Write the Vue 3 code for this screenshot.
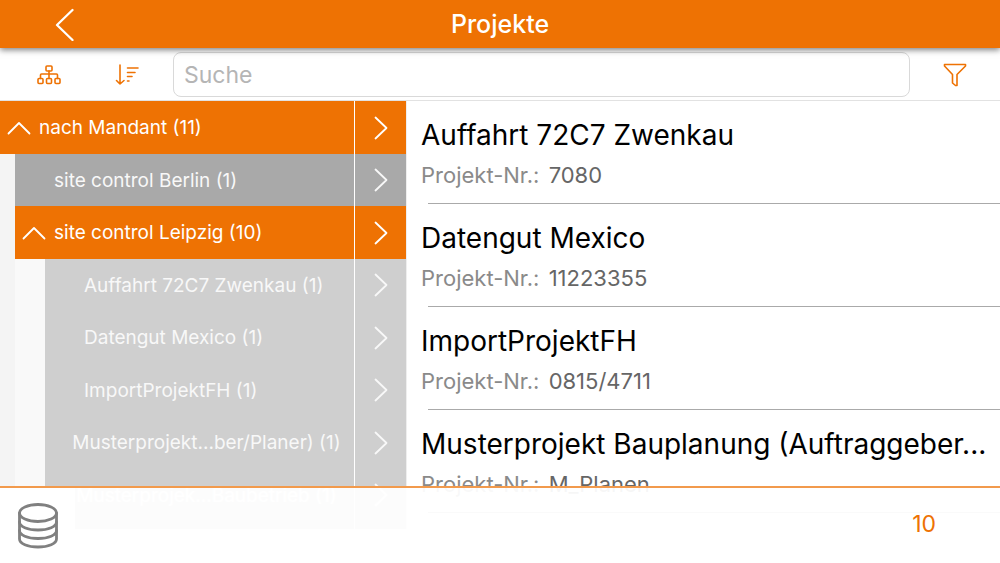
<script setup>
import { ref } from 'vue'

const search = ref('')

const tree = [
  { label: 'nach Mandant (11)', level: 0, open: true },
  { label: 'site control Berlin (1)', level: 1 },
  { label: 'site control Leipzig (10)', level: 1, open: true },
  { label: 'Auffahrt 72C7 Zwenkau (1)', level: 2 },
  { label: 'Datengut Mexico (1)', level: 2 },
  { label: 'ImportProjektFH (1)', level: 2 },
  { label: 'Musterprojekt...ber/Planer) (1)', level: 2, long: true },
  { label: 'Musterprojek...Baubetrieb (1)', level: 2, long: true },
  { label: '', level: 2 }
]

const projects = [
  { name: 'Auffahrt 72C7 Zwenkau', number: '7080' },
  { name: 'Datengut Mexico', number: '11223355' },
  { name: 'ImportProjektFH', number: '0815/4711' },
  { name: 'Musterprojekt Bauplanung (Auftraggeber...', number: 'M_Planen' }
]
</script>

<template>
  <div class="app">
    <header class="titlebar">
      <button class="back" type="button" aria-label="Zurück">
        <svg width="20" height="34" viewBox="0 0 20 34"><path d="M17.500 3 2 18 17.500 33" /></svg>
      </button>
      <h1>Projekte</h1>
    </header>

    <div class="toolbar">
      <button class="tool" type="button" aria-label="Gruppierung">
        <svg width="24" height="20" viewBox="0 0 24 20">
          <rect x="9" y="1" width="6" height="5" rx="1" />
          <rect x="1" y="13.500" width="5" height="5" rx="1" />
          <rect x="9.500" y="13.500" width="5" height="5" rx="1" />
          <rect x="18" y="13.500" width="5" height="5" rx="1" />
          <path d="M12 6v7.500M3.500 13.500V10q0-1 1-1h15q1 0 1 1v3.500" />
        </svg>
      </button>
      <button class="tool" type="button" aria-label="Sortierung">
        <svg width="24" height="22" viewBox="0 0 24 22">
          <path d="M5 1v19M1.500 16.500l3.500 3.500 4-3.500M12.500 4h10.500M12.500 8.500h7.500M12.500 12.500h4.500M12.500 17h1.500" />
        </svg>
      </button>
      <input v-model="search" class="search" type="search" placeholder="Suche" aria-label="Suche" />
      <button class="tool filter" type="button" aria-label="Filter">
        <svg width="24" height="24" viewBox="0 0 24 24">
          <path d="M1.500 1.500h21v1.500l-8.500 8.500v11h-1.500l-3-2.500v-8.500L1.500 3z" />
        </svg>
      </button>
    </div>

    <main class="content">
      <ul class="tree">
        <li v-for="(node, i) in tree" :key="i" class="node" :class="['level' + node.level, { open: node.open, long: node.long }]">
          <button class="label" type="button" :aria-label="node.label || 'Projekt'">
            <span class="toggle">
              <svg v-if="node.open" width="24" height="14" viewBox="0 0 24 14"><path d="M1.500 12.500 12 2l10.500 10.500" /></svg>
            </span>
            <span>{{ node.label }}</span>
          </button>
          <button class="go" type="button" aria-label="Öffnen">
            <svg v-if="node.label" width="14" height="24" viewBox="0 0 14 24"><path d="M1.500 1.500 12.500 12 1.500 22.500" /></svg>
          </button>
        </li>
      </ul>

      <ul class="projects">
        <li v-for="project in projects" :key="project.name" class="project">
          <h2>{{ project.name }}</h2>
          <p>Projekt-Nr.: <span>{{ project.number }}</span></p>
        </li>
      </ul>
    </main>

    <footer class="footer">
      <button class="database" type="button" aria-label="Datenbank">
        <svg width="42" height="48" viewBox="0 0 42 48">
          <ellipse cx="21" cy="11" rx="18.500" ry="8.500" />
          <path d="M2.500 11v26c0 4.500 8 8 18.500 8s18.500-3.500 18.500-8V11" />
          <path d="M2.500 20c0 4.500 8 8 18.500 8s18.500-3.500 18.500-8M2.500 28.500c0 4.500 8 8 18.500 8s18.500-3.500 18.500-8" />
        </svg>
      </button>
      <span class="count">10</span>
    </footer>
  </div>
</template>

<style>
body {
  margin: 0;
  background: #fff;
}
</style>

<style scoped>
.app {
  position: relative;
  display: flex;
  flex-direction: column;
  height: 100vh;
  overflow: hidden;
  font-family: Inter, "Liberation Sans", sans-serif;
}
button {
  padding: 0;
  border: 0;
  background: none;
  font: inherit;
  color: inherit;
}
svg {
  display: block;
  fill: none;
  stroke: currentColor;
  stroke-linecap: round;
  stroke-linejoin: round;
}
ul {
  margin: 0;
  padding: 0;
  list-style: none;
}
.titlebar {
  position: relative;
  z-index: 1;
  display: grid;
  grid-template-columns: 1fr auto 1fr;
  align-items: center;
  flex: none;
  height: 48px;
  background: #ee7203;
  color: #fff;
  box-shadow: 0 2px 6px rgba(0, 0, 0, 0.5);
}
.back {
  justify-self: start;
  margin-left: 55px;
  stroke-width: 2.3;
}
h1 {
  margin: 0;
  font-size: 25px;
  line-height: 46px;
  font-weight: 500;
}
.toolbar {
  display: flex;
  align-items: center;
  flex: none;
  height: 53px;
  box-sizing: border-box;
  border-bottom: 1px solid #e2e2e2;
  padding: 1px 0 0 10px;
}
.tool {
  display: grid;
  place-items: center;
  width: 78px;
  height: 44px;
  color: #ee7203;
  stroke-width: 1.6;
}
.filter {
  width: 90px;
}
.search {
  flex: 1;
  min-width: 0;
  height: 45px;
  margin: 0 0 0 7px;
  padding: 0 10px;
  box-sizing: border-box;
  border: 1px solid #d9d9d9;
  border-radius: 8px;
  background: transparent;
  font: inherit;
  font-size: 23px;
  appearance: none;
  outline: 0;
}
.search::placeholder {
  color: #b5b5b5;
}
.content {
  display: flex;
  flex: 1;
  min-height: 0;
  margin-bottom: 34px;
  overflow: hidden;
}
.tree {
  flex: none;
  width: 406px;
  background: #f4f4f4;
}
.node {
  display: flex;
  height: 52px;
  box-sizing: border-box;
  background: linear-gradient(#fff, #fff) right / 52px 100% no-repeat;
  color: #f8f8f8;
  font-size: 19px;
}
.node:nth-child(odd) {
  height: 53px;
}
.label {
  display: flex;
  align-items: center;
  flex: 1;
  min-width: 0;
  background: #a9a9a9;
  white-space: nowrap;
}
.go {
  display: grid;
  place-items: center;
  width: 51px;
  margin-left: 1px;
  background: #a9a9a9;
  stroke-width: 1.8;
}
.level1 {
  padding-left: 15px;
}
.level2 {
  padding-left: 45px;
  background:
    linear-gradient(#fff, #fff) right / 52px 100% no-repeat,
    linear-gradient(90deg, #f4f4f4 15px, #f9f9f9 15px);
}
.level2 .label,
.level2 .go {
  background: #cfcfcf;
}
.open {
  color: #fff;
}
.open .label,
.open .go {
  background: #ee7203;
}
.toggle {
  width: 32px;
  padding-left: 7px;
  stroke-width: 1.8;
}
.long .label {
  justify-content: center;
  padding-left: 14px;
}
.long .toggle {
  display: none;
}
.projects {
  flex: 1;
  min-width: 0;
  border-left: 1px solid #eee;
  background: #fff;
}
.project {
  height: 103px;
  box-sizing: border-box;
  padding: 16px 8px 0 14px;
  background: linear-gradient(#aaa, #aaa) 21px 100% / 100% 1px no-repeat;
}
h2 {
  margin: 0;
  overflow: hidden;
  color: #000;
  font-size: 28px;
  line-height: 36px;
  font-weight: 400;
  text-overflow: ellipsis;
  white-space: nowrap;
}
p {
  margin: 0;
  padding-top: 8px;
  color: #8a8a8a;
  font-size: 22px;
  line-height: 28px;
}
p span {
  margin-left: 3px;
  color: #666;
}
.footer {
  position: absolute;
  right: 0;
  bottom: 0;
  left: 0;
  display: flex;
  align-items: center;
  justify-content: space-between;
  height: 77px;
  box-sizing: border-box;
  border-top: 2px solid #f29a4c;
  padding-bottom: 4px;
  background: rgba(255, 255, 255, 0.94);
}
.database {
  display: grid;
  place-items: center;
  align-self: flex-start;
  width: 75px;
  height: 75px;
  background: #fff;
  color: #808080;
  stroke-width: 2.8;
}
.count {
  margin-right: 64px;
  color: #ee7203;
  font-size: 23px;
}
</style>
